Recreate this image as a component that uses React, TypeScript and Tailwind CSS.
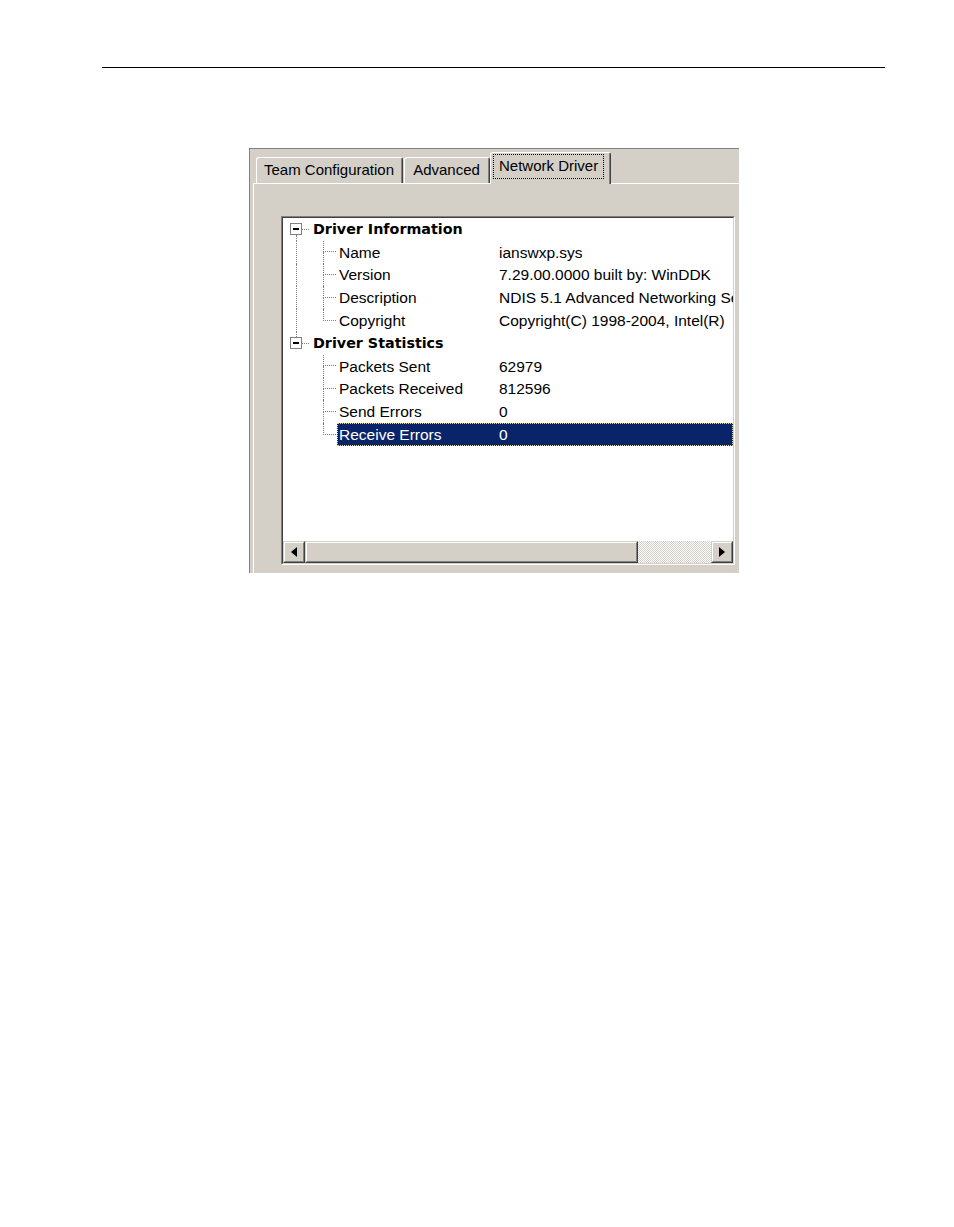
import type { ReactNode } from "react";

const info = [
  ["Name", "ianswxp.sys"],
  ["Version", "7.29.00.0000 built by: WinDDK"],
  ["Description", "NDIS 5.1 Advanced Networking Services"],
  ["Copyright", "Copyright(C) 1998-2004, Intel(R)"],
];

const stats = [
  ["Packets Sent", "62979"],
  ["Packets Received", "812596"],
  ["Send Errors", "0"],
  ["Receive Errors", "0"],
];

// dotted vertical tree line
const vline = "w-[12px] border-l border-dotted border-[#808080]";

const Raised = ({ className, children }: { className?: string; children?: ReactNode }) => (
  <div
    className={`border border-t-[#d4d0c8] border-l-[#d4d0c8] border-r-[#404040] border-b-[#404040] ${className ?? ""}`}
  >
    <div className="flex h-full items-center justify-center border border-t-white border-l-white border-r-[#808080] border-b-[#808080] bg-[#d4d0c8]">
      {children}
    </div>
  </div>
);

const RootRow = ({ label, above, below }: { label: string; above: boolean; below: boolean }) => (
  <div className="flex h-[22.8px]">
    <div className="flex w-[26px] flex-col">
      <div className={`ml-[13px] flex-1 ${above ? vline : ""}`} />
      <div className="flex items-center">
        <div className="ml-[7px] flex h-[12px] w-[12px] items-center justify-center border border-[#808080] bg-white">
          <div className="h-[2px] w-[6px] bg-black" />
        </div>
        <div className="w-[7px] border-t border-dotted border-[#808080]" />
      </div>
      <div className={`ml-[13px] flex-1 ${below ? vline : ""}`} />
    </div>
    <div className="flex items-center pl-[4px] font-['DejaVu_Sans',sans-serif] text-[14.3px] font-bold">
      {label}
    </div>
  </div>
);

const ChildRow = ({
  label,
  value,
  trunk,
  last,
  selected,
}: {
  label: string;
  value: string;
  trunk: boolean;
  last: boolean;
  selected?: boolean;
}) => (
  <div className="flex h-[22.8px]">
    <div className="flex w-[25px]">{trunk && <div className={`ml-[13px] ${vline}`} />}</div>
    <div className="flex w-[29px] flex-col">
      <div className="ml-[15px] h-1/2 w-[13px] border-b border-l border-dotted border-[#808080]" />
      <div className={`ml-[15px] flex-1 ${last ? "" : "border-l border-dotted border-[#808080]"}`} />
    </div>
    <div
      className={`flex min-w-0 flex-1 items-center whitespace-nowrap border border-dotted ${
        selected ? "border-[#e6d88e] bg-[#0a246a] text-white" : "border-transparent"
      }`}
    >
      <span className="w-[161px] shrink-0 pl-[1px]">{label}</span>
      <span>{value}</span>
    </div>
  </div>
);

export default function App() {
  return (
    <div className="min-h-[1227px] w-[954px] bg-white pt-[67px]">
      <div className="ml-[102px] h-px w-[783px] bg-black" />

      <div className="ml-[249px] mt-[80px] flex h-[425px] w-[490px] flex-col overflow-hidden border-l border-t border-[#808080] bg-[#d4d0c8] font-['Liberation_Sans',Arial,sans-serif] text-black">
        {/* tabs */}
        <div className="flex h-[34px] items-end pl-[6px] text-[15px]">
          <div className="h-[26px] w-[147px] rounded-t-[3px] border-l border-t border-r border-white border-r-[#404040]">
            <div className="flex h-full items-center justify-center border-r border-[#808080]">
              Team Configuration
            </div>
          </div>
          <div className="ml-[1px] h-[26px] w-[86px] rounded-t-[3px] border-l border-t border-r border-white border-r-[#404040]">
            <div className="flex h-full items-center justify-center border-r border-[#808080]">
              Advanced
            </div>
          </div>
          <div className="relative z-10 -mb-px h-[32px] w-[121px] rounded-t-[3px] border-l border-t border-r border-white border-r-[#404040] bg-[#d4d0c8]">
            <div className="flex h-full flex-col items-start border-r border-[#808080] pl-[2px] pt-[1px]">
              <span className="flex h-[25px] items-center border border-dotted border-black px-[5px]">
                Network Driver
              </span>
            </div>
          </div>
        </div>

        {/* panel */}
        <div className="ml-[3px] flex-1 border-l border-t border-white pl-[27px] pt-[32px] text-[15.5px]">
          <div className="h-[349px] w-[454px] border border-t-[#808080] border-l-[#808080] border-r-white border-b-white">
            <div className="flex h-full flex-col border border-t-[#404040] border-l-[#404040] border-r-[#d4d0c8] border-b-[#d4d0c8]">
              <div className="flex-1 overflow-hidden bg-white">
                <RootRow label="Driver Information" above={false} below />
                {info.map(([label, value], i) => (
                  <ChildRow key={label} label={label} value={value} trunk last={i === info.length - 1} />
                ))}
                <RootRow label="Driver Statistics" above below={false} />
                {stats.map(([label, value], i) => (
                  <ChildRow
                    key={label}
                    label={label}
                    value={value}
                    trunk={false}
                    last={i === stats.length - 1}
                    selected={i === stats.length - 1}
                  />
                ))}
              </div>

              {/* horizontal scrollbar */}
              <div className="flex h-[22px]">
                <Raised className="w-[22px]">
                  <svg width="6" height="10" viewBox="0 0 6 10">
                    <path d="M6 0 L0 5 L6 10 Z" fill="#000" />
                  </svg>
                </Raised>
                <Raised className="w-[333px]" />
                <div className="flex-1 bg-[repeating-conic-gradient(#d4d0c8_0%_25%,#ffffff_0%_50%)] bg-size-[2px_2px]" />
                <Raised className="w-[22px]">
                  <svg width="6" height="10" viewBox="0 0 6 10">
                    <path d="M0 0 L6 5 L0 10 Z" fill="#000" />
                  </svg>
                </Raised>
              </div>
            </div>
          </div>
        </div>
      </div>
    </div>
  );
}
